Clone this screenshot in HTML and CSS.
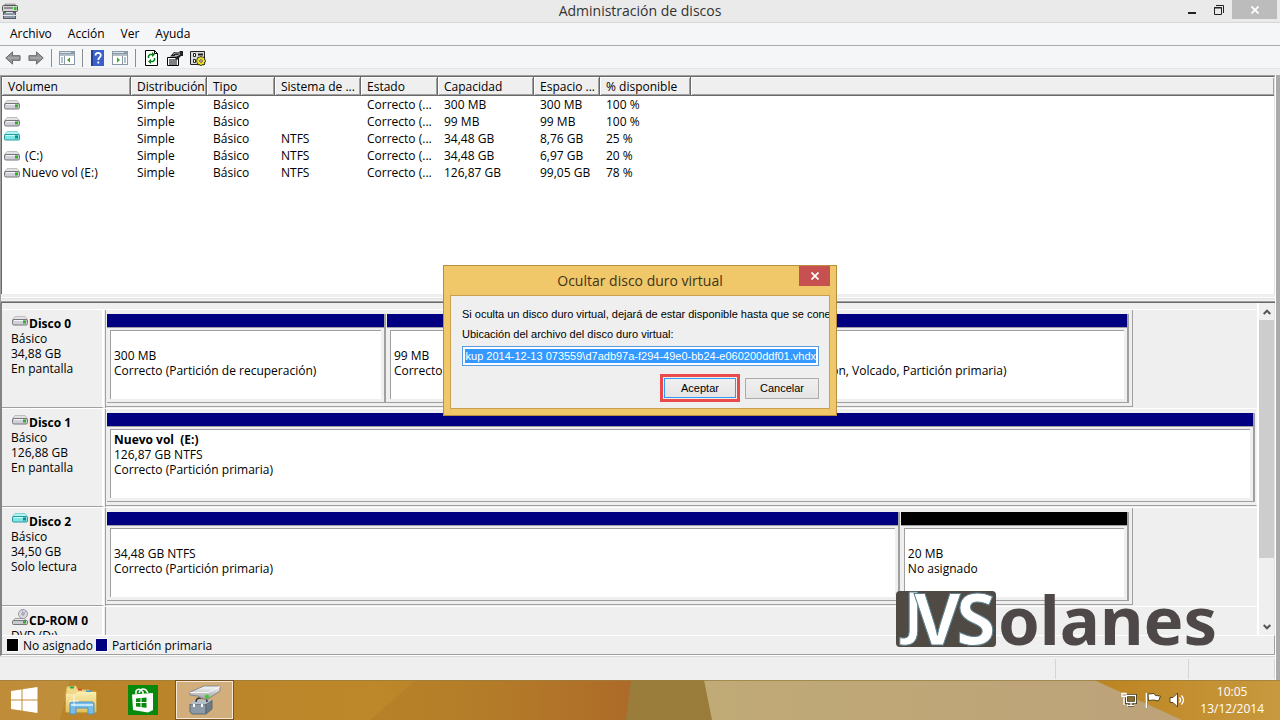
FILE: index.html
```html
<!DOCTYPE html>
<html lang="es">
<head>
<meta charset="utf-8">
<title>Administración de discos</title>
<link rel="stylesheet" href="styles.css">
</head>
<body>
<svg class="defs" aria-hidden="true">
  <defs>
    <linearGradient id="metal" x1="0" y1="0" x2="0" y2="1"><stop offset="0" stop-color="#fafafa"/><stop offset="1" stop-color="#9a9ea4"/></linearGradient>
    <linearGradient id="folder" x1="0" y1="0" x2="0" y2="1"><stop offset="0" stop-color="#fbeeb0"/><stop offset="1" stop-color="#e3c05c"/></linearGradient>
  </defs>
  <symbol id="drive" viewBox="0 0 16 10">
    <path d="M3 .5h10l2.500 3H.5z" fill="#e2e2e4" stroke="#b4b4b6" stroke-width=".8"/>
    <rect x=".5" y="3.500" width="15" height="5.500" rx="1.500" fill="#cfd0da" stroke="#77777b"/>
    <path d="M2 4.500h9" stroke="#f6f6fa"/>
    <rect x="11" y="4.500" width="3" height="3" fill="#31b51f"/>
  </symbol>
  <symbol id="drive-cyan" viewBox="0 0 16 10">
    <path d="M3 .5h10l2.500 3H.5z" fill="#b0f3f3" stroke="#6fc9cb" stroke-width=".8"/>
    <rect x=".5" y="3.500" width="15" height="5.500" rx="1" fill="#7fe6e6" stroke="#2d979b"/>
    <path d="M2 4.500h9" stroke="#c5ffff"/>
    <rect x="11" y="4.500" width="3" height="3" fill="#178a8d"/>
  </symbol>
</svg>

<header class="titlebar">
  <svg class="app-icon" viewBox="0 0 16 16" width="16" height="16"><path d="M3 .5h10l2.500 3H.5z" fill="#aaa"/><rect x=".5" y="2.500" width="15" height="6" rx="1" fill="#d6d6d6" stroke="#555"/><path d="M2 5h9" stroke="#444"/><rect x="12" y="4" width="2.500" height="3" fill="#2bc81d"/><rect x="1.500" y="9.500" width="12" height="6" fill="#8c99a5" stroke="#525c66"/><path d="M4 9.500h7M1 12.500h13" stroke="#dde4ea"/></svg>
  <h1 class="title">Administración de discos</h1>
  <div class="window-buttons">
    <button class="win-btn" aria-label="Minimizar"><svg width="10" height="16" viewBox="0 0 10 16"><path d="M1 11h8" stroke="#222" stroke-width="2"/></svg></button>
    <button class="win-btn" aria-label="Restaurar"><svg width="10" height="10" viewBox="0 0 10 10"><path d="M2 .5h7.500V8" fill="none" stroke="#222"/><path d="M.5 2.500h7v7h-7zM0 3h8" fill="none" stroke="#222"/></svg></button>
    <button class="win-btn win-close" aria-label="Cerrar"><svg width="8" height="8" viewBox="0 0 8 8"><path d="M.5.5l7 7m0-7l-7 7" stroke="#fff" stroke-width="1.700"/></svg></button>
  </div>
</header>

<nav class="menu">
  <button>Archivo</button><button>Acción</button><button>Ver</button><button>Ayuda</button>
</nav>

<div class="toolbar">
  <button aria-label="Atrás"><svg width="16" height="16" viewBox="0 0 17 16"><path d="M.8 8L8 1.500v4h8v5H8v4z" fill="#949494" stroke="#646464"/><path d="M3 8h12" stroke="#b5b5b5"/></svg></button>
  <button aria-label="Adelante"><svg width="16" height="16" viewBox="0 0 17 16"><path d="M16.200 8L9 1.500v4H1v5h8v4z" fill="#949494" stroke="#646464"/><path d="M2 8h12" stroke="#b5b5b5"/></svg></button>
  <span class="sep"></span>
  <button aria-label="Mostrar árbol"><svg width="16" height="14" viewBox="0 0 16 14"><path d="M0 0h16v14H0z" fill="#8b98a5"/><path d="M1 1.500h11M1 4h14" stroke="#dbe3ea"/><path d="M1 5h4v8H1zM6 5h9v8H6z" fill="#fff"/><path d="M2 7h2M2 9h2M2 11h2" stroke="#6783a0"/><path d="M11 6.500v5L8 9z" fill="#36a51c"/></svg></button>
  <span class="sep"></span>
  <button class="help" aria-label="Ayuda"><svg width="13" height="16" viewBox="0 0 13 16"><path d="M0 0h13v16H0z" fill="#3b60c8"/><path d="M0 0h2v16H0z" fill="#244294"/><path d="M4.500 5.500C4.500 2 9.800 2 9.800 5.300c0 2.200-2.500 2-2.500 4.700M7.300 11.500v2" fill="none" stroke="#fff" stroke-width="1.800"/></svg></button>
  <button aria-label="Mostrar acciones"><svg width="16" height="14" viewBox="0 0 16 14"><path d="M0 0h16v14H0z" fill="#8b98a5"/><path d="M1 1.500h11M1 4h14" stroke="#dbe3ea"/><path d="M1 5h9v8H1zM11 5h4v8h-4z" fill="#fff"/><path d="M12 7h2M12 9h2M12 11h2" stroke="#6783a0"/><path d="M5 6.500v5L8 9z" fill="#36a51c"/></svg></button>
  <span class="sep"></span>
  <button class="refresh" aria-label="Actualizar"><svg width="13" height="16" viewBox="0 0 13 16"><path d="M.5.500h9l3 3v12H.5z" fill="#fff" stroke="#000"/><path d="M9.500.5v3h3" fill="none" stroke="#000"/><path d="M3.500 8V6l1.500-1.500h3M9.500 8v2L8 11.500H5" fill="none" stroke="#087f16" stroke-width="1.500"/><path d="M7 2l3 2.500L7 7zM6 9v5l-3-2.500z" fill="#087f16"/></svg></button>
  <button aria-label="Propiedades"><svg width="16" height="15" viewBox="0 0 16 15"><path d="M.5 6.500h11v8H.5z" fill="#fff" stroke="#000"/><path d="M2 9h8M2 11h8M2 13h8" stroke="#000"/><path d="M3 5.500L7 1h5l1-1h3v5h-2l-4 4-2-1 2-2.500z" fill="#222"/><path d="M6 3.500l2-1.500h5M8 4.500h3l2-1.500" fill="none" stroke="#b5b5c4"/></svg></button>
  <button aria-label="Configuración"><svg width="16" height="15" viewBox="0 0 16 15"><path d="M.5.500h14v13H.5z" fill="#ddd" stroke="#222"/><path d="M3.500 2.500h2v3h-2zM3.500 8.500h2v3h-2z" fill="#fff" stroke="#222"/><path d="M8 3.500h5" stroke="#222" stroke-width="2"/><path d="M11 5v10M6 10h10M7.500 6.500l7 7m0-7l-7 7" stroke="#222" stroke-width="2.500"/><circle cx="11" cy="10" r="3.500" fill="#efe027"/><path d="M11 5.500v9M6.500 10h9M8 7l6 6m0-6l-6 6" stroke="#efe027" stroke-width="1.300"/><circle cx="11" cy="10" r="1.300" fill="#fff" stroke="#555"/></svg></button>
</div>

<div class="workspace">
 <main class="content">
  <section class="volumes">
    <div class="volume-list">
    <table>
      <colgroup><col class="c-vol"><col class="c-dist"><col class="c-type"><col class="c-fs"><col class="c-state"><col class="c-cap"><col class="c-free"><col class="c-pct"><col></colgroup>
      <thead><tr><th>Volumen</th><th>Distribución</th><th>Tipo</th><th>Sistema de ...</th><th>Estado</th><th>Capacidad</th><th>Espacio ...</th><th>% disponible</th><th></th></tr></thead>
      <tbody>
      <tr><td><svg class="vol"><use href="#drive"/></svg></td><td>Simple</td><td>Básico</td><td></td><td>Correcto (...</td><td>300 MB</td><td>300 MB</td><td>100 %</td><td></td></tr>
      <tr><td><svg class="vol"><use href="#drive"/></svg></td><td>Simple</td><td>Básico</td><td></td><td>Correcto (...</td><td>99 MB</td><td>99 MB</td><td>100 %</td><td></td></tr>
      <tr><td><svg class="vol vol-high"><use href="#drive-cyan"/></svg></td><td>Simple</td><td>Básico</td><td>NTFS</td><td>Correcto (...</td><td>34,48 GB</td><td>8,76 GB</td><td>25 %</td><td></td></tr>
      <tr><td><svg class="vol"><use href="#drive"/></svg>&nbsp;(C:)</td><td>Simple</td><td>Básico</td><td>NTFS</td><td>Correcto (...</td><td>34,48 GB</td><td>6,97 GB</td><td>20 %</td><td></td></tr>
      <tr><td><svg class="vol"><use href="#drive"/></svg>Nuevo vol (E:)</td><td>Simple</td><td>Básico</td><td>NTFS</td><td>Correcto (...</td><td>126,87 GB</td><td>99,05 GB</td><td>78 %</td><td></td></tr>
      </tbody>
    </table>
    </div>
    <div class="splitter"></div>
  </section>

  <section class="graph">
    <div class="graph-view">
      <div class="disks">
        <div class="disk">
          <div class="disk-info"><div class="disk-name"><svg class="vol"><use href="#drive"/></svg><b>Disco 0</b></div><p>Básico</p><p>34,88 GB</p><p>En pantalla</p></div>
          <div class="track"><div class="parts parts-most">
            <div class="part w-recovery"><div class="bar"></div><div class="box"><b></b><p>300 MB</p><p>Correcto (Partición de recuperación)</p></div></div>
            <div class="part w-efi"><div class="bar"></div><div class="box"><b></b><p>99 MB</p><p>Correcto (Partición de sistema EFI)</p></div></div>
            <div class="part w-rest"><div class="bar"></div><div class="box"><b>(C:)</b><p>34,48 GB NTFS</p><p>Correcto (Arranque, Archivo de paginación, Volcado, Partición primaria)</p></div></div>
          </div></div>
        </div>
        <div class="disk">
          <div class="disk-info"><div class="disk-name"><svg class="vol"><use href="#drive"/></svg><b>Disco 1</b></div><p>Básico</p><p>126,88 GB</p><p>En pantalla</p></div>
          <div class="track"><div class="parts">
            <div class="part w-rest"><div class="bar"></div><div class="box"><b>Nuevo vol&nbsp; (E:)</b><p>126,87 GB NTFS</p><p>Correcto (Partición primaria)</p></div></div>
          </div></div>
        </div>
        <div class="disk">
          <div class="disk-info"><div class="disk-name"><svg class="vol vol-high"><use href="#drive-cyan"/></svg><b>Disco 2</b></div><p>Básico</p><p>34,50 GB</p><p>Solo lectura</p></div>
          <div class="track"><div class="parts parts-most">
            <div class="part w-rest"><div class="bar"></div><div class="box"><b></b><p>34,48 GB NTFS</p><p>Correcto (Partición primaria)</p></div></div>
            <div class="part w-free"><div class="bar bar-free"></div><div class="box"><b></b><p>20 MB</p><p>No asignado</p></div></div>
          </div></div>
        </div>
        <div class="disk">
          <div class="disk-info"><div class="disk-name"><svg class="cd" width="16" height="16" viewBox="0 0 16 16"><circle cx="11" cy="5" r="4.500" fill="#d9dbe4" stroke="#999"/><path d="M11 5l3-3M11 5l-1-4" stroke="#b9a8dc"/><circle cx="11" cy="5" r="1.200" fill="#fff" stroke="#888"/><path d="M3 9.500h9l3 2.500H1z" fill="#eee" stroke="#999"/><rect x=".5" y="11.500" width="15" height="4" rx="1" fill="#c9cad0" stroke="#777"/><rect x="11" y="12" width="3" height="2.500" fill="#31b51f"/></svg><b>CD-ROM 0</b></div><p>DVD (D:)</p></div>
          <div class="track"></div>
        </div>
      </div>
      <div class="scrollbar">
        <button aria-label="Subir"><svg width="8" height="6" viewBox="0 0 8 6"><path d="M.7 5L4 1.700 7.300 5" fill="none" stroke="#555" stroke-width="2"/></svg></button>
        <div class="rail"><div class="thumb"></div></div>
        <button aria-label="Bajar"><svg width="8" height="6" viewBox="0 0 8 6"><path d="M.7 1L4 4.300 7.300 1" fill="none" stroke="#555" stroke-width="2"/></svg></button>
      </div>
    </div>
    <div class="legend"><i class="key key-free"></i><span>No asignado</span><i class="key"></i><span>Partición primaria</span></div>
  </section>
  <footer class="status"><span class="status-main"></span><span class="status-a"></span><span class="status-b"></span></footer>
 </main>
</div>

<div class="taskbar">
  <svg class="wallpaper" viewBox="0 0 1280 40" preserveAspectRatio="none" aria-hidden="true">
    <defs>
      <linearGradient id="w1"><stop offset="0" stop-color="#b8822b"/><stop offset=".6" stop-color="#bd8829"/><stop offset=".78" stop-color="#b47c29"/><stop offset="1" stop-color="#ad6a28"/></linearGradient>
      <linearGradient id="w2"><stop offset="0" stop-color="#c0aa76"/><stop offset="1" stop-color="#bda27a"/></linearGradient>
      <linearGradient id="w3"><stop offset="0" stop-color="#bd8420"/><stop offset="1" stop-color="#c8993f"/></linearGradient>
      <linearGradient id="w4"><stop offset="0" stop-color="#a87226" stop-opacity=".35"/><stop offset="1" stop-color="#a87226" stop-opacity="0"/></linearGradient>
    </defs>
    <path d="M0 0h632v40H0z" fill="url(#w1)"/>
    <path d="M0 0h70L60 40H0z" fill="#c49747" opacity=".55"/>
    <path d="M416 0h110v40H370z" fill="url(#w4)"/>
    <path d="M631 0h74l8 40h-87z" fill="#9b7d3b"/>
    <path d="M704 0h480v40H712z" fill="url(#w2)"/>
    <path d="M1094 0h186v40h-98z" fill="url(#w3)"/>
    <path d="M0 .5h1280" stroke="#9a7d3e" opacity=".7"/>
  </svg>
  <div class="tasks">
    <button class="task" aria-label="Inicio"><svg width="28" height="26" viewBox="0 0 28 26"><path d="M1 4l10.500-1.500v10H1zM12.500 2.300L27.500 0v12.500h-15zM1 13.500h10.500v10L1 22zM12.500 13.500h15V26l-15-2.300z" fill="#fff"/></svg></button>
    <button class="task" aria-label="Explorador de archivos"><svg width="32" height="30" viewBox="0 0 32 30"><path d="M2 2l9-1 1 3h5l1 1h6l1 2h6v20H1V8z" fill="#f0d884" stroke="#d9b95c"/><path d="M5 1.500h4v2H5z" fill="#2aa84a"/><path d="M13 3.500h4v2h-4z" fill="#d3432f"/><path d="M21 5.500h5v2h-5z" fill="#3a9be0"/><path d="M1 9h9l2-2h19v20H1z" fill="url(#folder)"/><path d="M5 29V19q0-2 2-2h20q2 0 2 2v10h-6v-6H11v6z" fill="#79bde6" stroke="#4a95c8"/><path d="M6 20h22" stroke="#c3e6fa" stroke-width="2"/><path d="M9 10v11M4 16h10" stroke="#fff" opacity=".8"/></svg></button>
    <button class="task" aria-label="Tienda"><svg width="30" height="30" viewBox="0 0 30 30"><path d="M0 0h30v30H0z" fill="#078a0c"/><path d="M4 9.500L25 8v17l-5 2.500L5 25z" fill="#fff"/><path d="M8 9V6q3-4 7 1v2M11 8q2-6 7-3l2 3" fill="none" stroke="#fff" stroke-width="1.500"/><path d="M8 13.500l4.500-.5v4H8zM13.500 13l5-.5V17h-5zM8 18h4.500v4L8 21.500zM13.500 18h5v4.800l-5-.6z" fill="#078a0c"/></svg></button>
    <button class="task task-active" aria-label="Administración de discos"><svg width="32" height="30" viewBox="0 0 32 30"><path d="M1 19h16v10H3l-2-2z" fill="#8c9aa7" stroke="#5b6873"/><path d="M17 19l6-4v9l-6 5z" fill="#6d7a86" stroke="#5b6873"/><path d="M1 19l5-4h17l-6 4z" fill="#b3bec8"/><path d="M7 17q0-4 4-4h4q3 0 3 4" fill="none" stroke="#333" stroke-width="1.500"/><path d="M5 19v3M13 19v3" stroke="#fff" stroke-width="2"/><path d="M1 7L15 1h16v5l-12 8h-5l-5-3-8-1z" fill="url(#metal)" stroke="#888"/><path d="M1 7.500h18l12-6" fill="none" stroke="#f4f4f4"/><circle cx="18" cy="11.500" r="2" fill="#40ca25"/></svg></button>
  </div>
  <div class="tray">
    <svg width="16" height="16" viewBox="0 0 16 16"><path d="M5.500 3.500h9v7h-9zM7 13.500h6M10 11v2" fill="#8c6b2b" stroke="#3d300f" stroke-width="3"/><path d="M5.500 3.500h9v7h-9zM6 13.500h7M10 11v2M3 6v7M1 1.500h4v3H1z" fill="none" stroke="#fff" stroke-width="1.300"/></svg>
    <svg width="16" height="16" viewBox="0 0 16 16"><path d="M2 1v15M3 2l6-.5 1.500 2 5 .5-2 5-5-1-5 .500z" fill="#fff" stroke="#57431a"/><path d="M1.500 1v15" stroke="#fff" stroke-width="1.500"/></svg>
    <svg width="16" height="16" viewBox="0 0 16 16"><path d="M1 5.500h3L8.500 1v14L4 10.500H1z" fill="#fff" stroke="#57431a"/><path d="M10.500 5.500q2 2.500 0 5M12.500 3.500q4 4.500 0 9" fill="none" stroke="#fff" stroke-width="1.300"/></svg>
    <time class="clock"><span>10:05</span><span>13/12/2014</span></time>
  </div>
</div>

<svg class="brand" viewBox="0 0 324 64" role="img" aria-label="JVSolanes">
  <rect x="0" y="1" width="100" height="56" rx="4" fill="#4f4a44"/>
  <g class="brand-mark"><text x="8" y="43" class="mark-j">J</text><text x="18" y="55">V</text><text x="60" y="55">S</text></g>
  <text x="102" y="55" class="brand-name">olanes</text>
</svg>

<div class="dialog" role="dialog" aria-labelledby="dlg-title">
  <div class="dialog-head"><h2 id="dlg-title">Ocultar disco duro virtual</h2><button class="dialog-close" aria-label="Cerrar"><svg width="8" height="8" viewBox="0 0 8 8"><path d="M.5.5l7 7m0-7l-7 7" stroke="#fff" stroke-width="1.700"/></svg></button></div>
  <form class="dialog-body">
    <p>Si oculta un disco duro virtual, dejará de estar disponible hasta que se conecte</p>
    <label for="path">Ubicación del archivo del disco duro virtual:</label>
    <input id="path" type="text" dir="rtl" value="Backup 2014-12-13 073559\d7adb97a-f294-49e0-bb24-e060200ddf01.vhdx">
    <div class="actions"><span class="highlight"><button type="button" class="btn btn-default">Aceptar</button></span><button type="button" class="btn">Cancelar</button></div>
  </form>
</div>
</body>
</html>
```
FILE: styles.css
```css
* { box-sizing: border-box; }
html, body { height: 100%; }
body {
  margin: 0;
  display: flex;
  flex-direction: column;
  position: relative;
  overflow: hidden;
  background: #efefef;
  color: #000;
  font: 12px/15px "Open Sans", "Noto Sans", sans-serif;
}
button { font: inherit; color: inherit; border: 0; background: none; padding: 0; }
p, h1, h2 { margin: 0; font-weight: normal; }
svg { display: block; flex: none; }
.defs { position: absolute; width: 0; height: 0; }

.titlebar {
  display: grid;
  grid-template-columns: 1fr auto 1fr;
  flex: 0 0 23px;
  background: #eaeaea;
  border-bottom: 1px solid #d5d8db;
}
.app-icon { margin: 3px 0 0 2px; }
.title { font-size: 14px; line-height: 22px; color: #333; }
.window-buttons { display: flex; justify-content: flex-end; padding-right: 3px; }
.win-btn { width: 27px; height: 19px; display: flex; align-items: center; justify-content: center; }
.win-close { width: 45px; background: #bcbcbc; }

.menu { display: flex; flex: 0 0 23px; gap: 16px; padding: 0 10px 2px; background: #f4f6f8; border-bottom: 1px solid #a9acb0; }
.toolbar { display: flex; align-items: center; flex: 0 0 23px; gap: 7px; padding: 2px 5px 0; background: #f4f6f8; border-bottom: 1px solid #e4e6e8; margin-bottom: 6px; }
.sep { width: 1px; height: 18px; background: #8d8d8d; }
.help { padding: 0 1px; }
.refresh { padding: 0 2px; }

.workspace { flex: 1; min-height: 0; padding-right: 4px; background: #ababab; }
.content { height: 100%; display: flex; flex-direction: column; background: #efefef; border-right: 1px solid #fff; }

.volumes {
  flex: 228 1 0;
  min-height: 0;
  display: flex;
  flex-direction: column;
  border-left: 1px solid #a0a0a0;
  border-top: 1px solid #a0a0a0;
}
.volume-list { flex: 1; min-height: 0; overflow: hidden; background: #fff; border-left: 1px solid #696969; border-top: 1px solid #696969; border-right: 1px solid #e3e3e3; }
table { width: 100%; table-layout: fixed; border-collapse: separate; border-spacing: 0; }
.c-vol { width: 129px; }
.c-dist { width: 76px; }
.c-type { width: 68px; }
.c-fs { width: 86px; }
.c-state { width: 77px; }
.c-cap { width: 96px; }
.c-free { width: 66px; }
.c-pct { width: 91px; }
th {
  height: 19px;
  padding: 0 0 0 6px;
  background: #efefef;
  border-right: 1px solid #696969;
  border-bottom: 1px solid #696969;
  box-shadow: inset 1px 1px #fff, inset -1px -1px #a0a0a0;
  font-weight: normal;
  text-align: left;
  white-space: nowrap;
}
th:last-child { border-right: 0; }
td { height: 17px; padding: 0 0 0 6px; white-space: nowrap; }
td:first-child { padding-left: 2px; }
.vol { width: 16px; height: 10px; display: inline-block; vertical-align: -1px; margin-right: 2px; }
.vol-high { vertical-align: 2px; }
.splitter { height: 9px; border-top: 3px solid #efefef; border-bottom: 1px solid #696969; box-shadow: inset 0 1px #fff, inset 0 2px #e3e3e3, inset 0 -1px #a0a0a0; }

.graph { flex: 353 1 0; min-height: 0; display: flex; flex-direction: column; border-left: 2px solid #838383; border-bottom: 1px solid #fff; }
.graph-view { flex: 1; min-height: 0; display: flex; overflow: hidden; border-right: 1px solid #e3e3e3; }
.disks { flex: 1; min-width: 0; padding-top: 6px; }
.disk { display: flex; height: 99px; border-top: 1px solid #fff; }
.disk-info { width: 102px; padding: 6px 0 0 9px; border-right: 2px solid #fff; border-bottom: 1px solid #a0a0a0; white-space: nowrap; }
.disk-name { display: flex; align-items: flex-start; }
.disk-name .vol { margin: 0 1px; }
.disk-name .vol-high { margin-top: -1px; }
.cd { margin: -4px 1px 0; }
.track { flex: 1; min-width: 0; margin-left: 1px; border-left: 1px solid #a0a0a0; }
.parts { display: flex; height: 97px; padding: 4px 1px 3px 1px; border-right: 1px solid #f5f5f5; border-bottom: 1px solid #a0a0a0; }
.parts-most { width: 89.2%; border-right-color: #a0a0a0; padding-right: 3px; }
.part { display: flex; flex-direction: column; min-width: 0; border-right: 2px solid #a0a0a0; border-bottom: 1px solid #a0a0a0; }
.part + .part { padding-left: 1px; }
.w-recovery { width: 27.3%; }
.w-efi { width: 21%; }
.w-rest { flex: 1; }
.w-free { width: 22.4%; }
.bar { height: 14px; background: navy; border-bottom: 1px solid #a0a0a0; }
.bar-free { background: #000; }
.box { flex: 1; margin: 2px 3px 3px 3px; padding: 2px 0 0 3px; overflow: hidden; white-space: nowrap; background: #fff; border-left: 1px solid #a0a0a0; border-top: 1px solid #a0a0a0; }
.box b { display: block; height: 15px; }
.scrollbar { width: 17px; display: flex; flex-direction: column; border-left: 2px solid #fff; }
.scrollbar button { height: 17px; display: flex; align-items: center; justify-content: center; }
.rail { flex: 1; background: #efefef; }
.thumb { height: 80%; background: #cdcdcd; }
.legend { display: flex; align-items: center; flex: 0 0 20px; padding-left: 5px; border-top: 1px solid #fff; border-right: 1px solid #a0a0a0; border-bottom: 1px solid #a0a0a0; }
.key { width: 12px; height: 14px; margin-right: 4px; border: 1px solid #fff; border-width: 1px 1px 1px 0; background: navy; }
.key-free { background: #000; }
.legend span { margin-right: 3px; }
.status { display: flex; flex: 0 0 24px; padding: 2px 0 1px; border-top: 1px solid #d9d9d9; }
.status-main { flex: 1; border-right: 1px solid #d5d5d5; }
.status-a { width: 133px; border-right: 1px solid #d5d5d5; }
.status-b { width: 86px; border-right: 1px solid #d5d5d5; }

.taskbar { position: relative; display: flex; justify-content: space-between; flex: 0 0 40px; }
.wallpaper { position: absolute; inset: 0; width: 100%; height: 100%; }
.tasks, .tray { position: relative; display: flex; align-items: center; }
.tasks { gap: 3px; }
.task { width: 59px; height: 40px; display: flex; align-items: center; justify-content: center; }
.task:first-child { width: 48px; }
.task-active { background: #d2ae7c; border: 1px solid #7a5320; box-shadow: inset 0 0 0 1px #f7ead8; }
.tray { gap: 8px; padding-right: 16px; color: #fff; }
.clock { display: grid; margin-left: 7px; line-height: 17px; text-align: center; }

.brand { position: absolute; left: 70%; top: 590px; width: 324px; height: 64px; }
.brand-mark { font: bold 72px "Noto Sans", sans-serif; fill: #fff; stroke: #5b8090; stroke-width: 1px; }
.mark-j { font-size: 57px; }
.brand-name { font: bold 67px "Noto Sans", sans-serif; fill: #4f4848; }

.dialog {
  position: absolute;
  left: 50%;
  top: 265px;
  width: 394px;
  margin-left: -197px;
  padding: 0 6px 6px;
  background: #f0c869;
  border: 1px solid #b58f3f;
  font: 11px/15px "Liberation Sans", sans-serif;
}
.dialog-head { position: relative; height: 29px; text-align: center; }
.dialog-head h2 { font: 14px/29px "Open Sans", "Noto Sans", sans-serif; color: #41341c; }
.dialog-close { position: absolute; right: 0; top: 0; width: 31px; height: 20px; background: #c75050; display: flex; align-items: center; justify-content: center; }
.dialog-body { display: flex; flex-direction: column; padding: 11px 10px 6px 11px; overflow: hidden; background: #efefef; border: 1px solid #c9a050; }
.dialog-body p { white-space: nowrap; margin-bottom: 5px; }
.dialog-body label { margin-bottom: 4px; }
.dialog-body input { width: 100%; height: 20px; padding: 2px; border: 1px solid #569de5; background: #39f content-box; box-shadow: inset 0 0 0 2px #fff; color: #fff; font: inherit; outline: 0; }
.actions { display: flex; justify-content: flex-end; align-items: center; gap: 5px; margin-top: 8px; }
.highlight { border: 3px solid #ea4a4a; padding: 1px; line-height: 0; }
.btn { width: 74px; height: 21px; border: 1px solid #acacac; background: linear-gradient(#f0f0f0, #e5e5e5); line-height: 15px; }
.btn-default { width: 72px; height: 20px; border-color: #39f; }
```
